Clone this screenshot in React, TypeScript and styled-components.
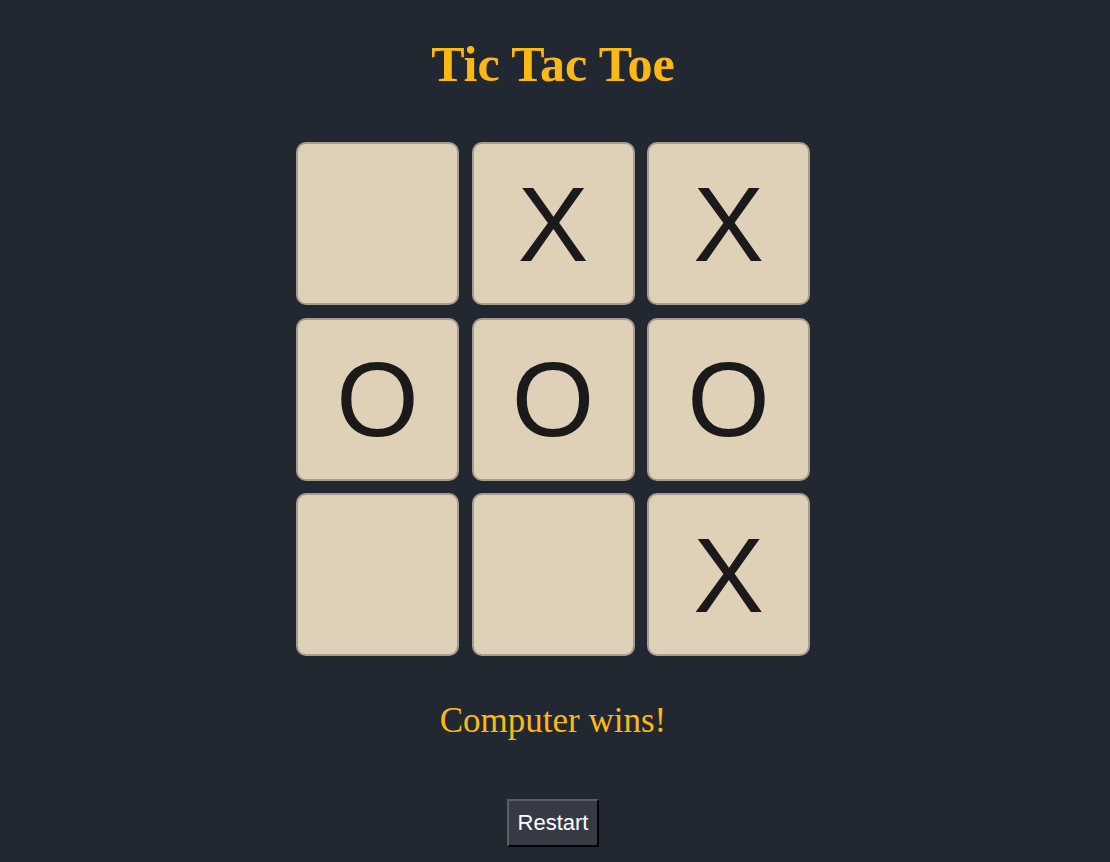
import React from "react";
import styled, { createGlobalStyle } from "styled-components";

const Global = createGlobalStyle`
  html, body { margin: 0; padding: 0; background: #222832; }
  body { font-family: "Liberation Serif", serif; }
`;

const Page = styled.div`
  display: flex;
  flex-direction: column;
  align-items: center;
  padding-right: 4px;
  min-height: 862px;
  box-sizing: border-box;
`;

const Title = styled.h1`
  margin: 34px 0 0;
  font-family: "Liberation Serif", serif;
  font-weight: bold;
  font-size: 50px;
  line-height: 60px;
  color: #fdb813;
`;

const Board = styled.div`
  margin-top: 48px;
  display: grid;
  grid-template-columns: repeat(3, 163px);
  grid-auto-rows: 163px;
  gap: 12.5px;
`;

const Cell = styled.button`
  box-sizing: border-box;
  background: #dfd1b8;
  border: 2px solid #a69d8e;
  border-radius: 10px;
  padding: 0;
  display: flex;
  align-items: center;
  justify-content: center;
  font-family: "Liberation Sans", Arial, sans-serif;
  font-size: 106px;
  line-height: 1;
  color: #1a1a1a;
  cursor: pointer;
`;

const Status = styled.p`
  margin: 44px 0 0;
  font-family: "Liberation Serif", serif;
  font-size: 35px;
  line-height: 42px;
  color: #fdb813;
`;

const RestartButton = styled.button`
  margin-top: 57px;
  box-sizing: border-box;
  height: 48px;
  padding: 0 9px;
  background: #363a45;
  color: #ffffff;
  font-family: "Liberation Sans", Arial, sans-serif;
  font-size: 22px;
  border: 2px outset #5a5d65;
  border-right-color: #0a0a0a;
  border-bottom-color: #0a0a0a;
  cursor: pointer;
`;

const board = ["", "X", "X", "O", "O", "O", "", "", "X"];

export default function App() {
  return (
    <>
      <Global />
      <Page>
        <Title>Tic Tac Toe</Title>
        <Board>
          {board.map((v, i) => (
            <Cell key={i}>{v}</Cell>
          ))}
        </Board>
        <Status>Computer wins!</Status>
        <RestartButton>Restart</RestartButton>
      </Page>
    </>
  );
}
